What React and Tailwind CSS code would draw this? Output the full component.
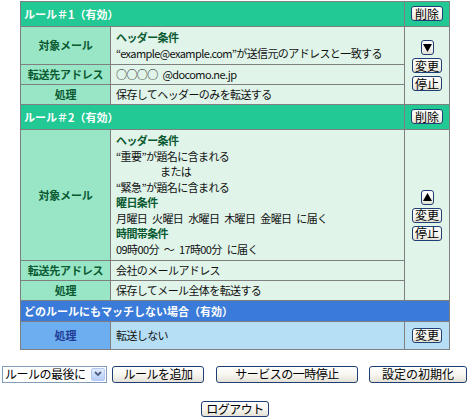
import React from 'react';

const font = 'font-["Noto_Sans_CJK_JP","Noto_Sans",sans-serif]';

function Btn({ children, className = '' }) {
    return (
        <span className={'inline-flex items-center justify-center rounded-[3px] border border-[#1e3f73] bg-linear-to-b from-white via-[#f7f6f1] to-[#e4e1d6] text-[12px] leading-none text-black ' + className}>
            {children}
        </span>
    );
}

function ActionButtons({ up }) {
    return (
        <div className="flex flex-col items-center gap-[3px]">
            <Btn className="w-[13px] h-[15px]">
                <svg width="9" height="8" viewBox="0 0 9 8">
                    {up ? <polygon points="4.5,0 9,8 0,8" fill="#000" /> : <polygon points="0,0 9,0 4.5,8" fill="#000" />}
                </svg>
            </Btn>
            <Btn className="w-[30px] h-[15px]">変更</Btn>
            <Btn className="w-[30px] h-[15px]">停止</Btn>
        </div>
    );
}

const cell = 'border border-[#7f7f7f]';
const label = cell + ' bg-[#98e6c6] text-[#0a5a32] font-bold text-center tracking-[-0.2px] leading-[15px] py-[2px]';
const body = cell + ' bg-[#e0f4e9] text-[#111] pl-[5px] tracking-[-0.6px] [word-spacing:3px] whitespace-nowrap leading-[15px] py-[2px]';
const head = cell + ' bg-[#22c994] text-white font-bold pl-[3px] leading-[16px] py-[4px]';
const sub = 'text-[#0a5a32] font-bold';

function RuleHeader({ title }) {
    return (
        <tr>
            <td colSpan={2} className={head}>{title}</td>
            <td className={cell + ' bg-[#22c994] text-center'}>
                <Btn className="w-[32px] h-[15px]">削除</Btn>
            </td>
        </tr>
    );
}

export default function App() {
    return (
        <div className={font + ' w-[470px] h-[420px] bg-white text-[11px]'}>
            <table className="mx-auto mt-[1px] w-[429px] table-fixed border-collapse border border-[#6f6f6f]">
                <colgroup>
                    <col className="w-[90px]" />
                    <col className="w-[294px]" />
                    <col className="w-[45px]" />
                </colgroup>
                <tbody>
                    <RuleHeader title="ルール＃1（有効）" />
                    <tr>
                        <td className={label + ' !py-[3px] !leading-[15.5px]'}>対象メール</td>
                        <td className={body + ' !py-[3px] !leading-[15.5px]'}>
                            <div className={sub}>ヘッダー条件</div>
                            <div>“example@example.com”が送信元のアドレスと一致する</div>
                        </td>
                        <td rowSpan={3} className={cell + ' bg-[#e0f4e9]'}>
                            <ActionButtons />
                        </td>
                    </tr>
                    <tr>
                        <td className={label}>転送先アドレス</td>
                        <td className={body}>○○○○ @docomo.ne.jp</td>
                    </tr>
                    <tr>
                        <td className={label}>処理</td>
                        <td className={body}>保存してヘッダーのみを転送する</td>
                    </tr>

                    <RuleHeader title="ルール＃2（有効）" />
                    <tr>
                        <td className={label + ' !py-[3px]'}>対象メール</td>
                        <td className={body + ' !py-[3px] !leading-[15.5px]'}>
                            <div className={sub}>ヘッダー条件</div>
                            <div>“重要”が題名に含まれる</div>
                            <div className="pl-[44px]">または</div>
                            <div>“緊急”が題名に含まれる</div>
                            <div className={sub}>曜日条件</div>
                            <div>月曜日 火曜日 水曜日 木曜日 金曜日 に届く</div>
                            <div className={sub}>時間帯条件</div>
                            <div>09時00分 ～ 17時00分 に届く</div>
                        </td>
                        <td rowSpan={3} className={cell + ' bg-[#e0f4e9]'}>
                            <ActionButtons up />
                        </td>
                    </tr>
                    <tr>
                        <td className={label}>転送先アドレス</td>
                        <td className={body}>会社のメールアドレス</td>
                    </tr>
                    <tr>
                        <td className={label}>処理</td>
                        <td className={body}>保存してメール全体を転送する</td>
                    </tr>

                    <tr>
                        <td colSpan={3} className={cell + ' bg-[#3a7bd9] text-white font-bold pl-[3px] leading-[16px] py-[2px]'}>
                            どのルールにもマッチしない場合（有効）
                        </td>
                    </tr>
                    <tr>
                        <td className={cell + ' bg-[#6caef0] text-[#1f3c96] font-bold text-center leading-[15px]'}>処理</td>
                        <td className={cell + ' bg-[#b6dff6] text-[#111] pl-[5px] tracking-[-0.6px] leading-[15px]'}>転送しない</td>
                        <td className={cell + ' bg-[#b6dff6] text-center py-[5px]'}>
                            <Btn className="w-[30px] h-[15px]">変更</Btn>
                        </td>
                    </tr>
                </tbody>
            </table>

            <div className="mt-[16px] flex items-center pl-[2px]">
                <div className="flex h-[17px] w-[105px] items-center border border-[#7f9db9] bg-white text-[12px] tracking-[-0.5px]">
                    <span className="flex-1 pl-[2px] leading-none">ルールの最後に</span>
                    <span className="mr-[1px] flex h-[13px] w-[14px] items-center justify-center rounded-[2px] border border-[#b3c8f2] bg-linear-to-b from-[#e3ecfd] to-[#b6cdf7]">
                        <svg width="8" height="6" viewBox="0 0 8 6">
                            <polyline points="1,1 4,4 7,1" fill="none" stroke="#4d6185" strokeWidth="1.8" />
                        </svg>
                    </span>
                </div>
                <Btn className="ml-[5px] w-[92px] h-[17px] tracking-[-0.5px]">ルールを追加</Btn>
                <Btn className="ml-[12px] w-[142px] h-[17px] tracking-[-0.5px]">サービスの一時停止</Btn>
                <Btn className="ml-[11px] w-[98px] h-[17px]">設定の初期化</Btn>
            </div>

            <div className="mt-[18px] flex justify-center">
                <Btn className="w-[68px] h-[16px] tracking-[-0.5px]">ログアウト</Btn>
            </div>
        </div>
    );
}
